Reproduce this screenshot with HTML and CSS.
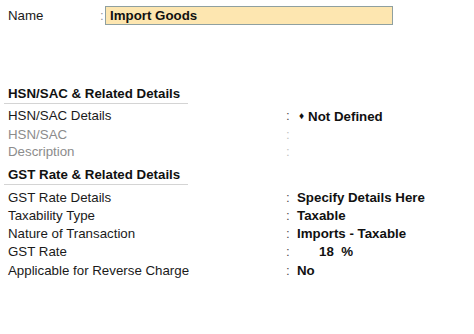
FILE: index.html
```html
<!DOCTYPE html>
<html lang="en">
<head>
    <meta charset="UTF-8">
    <title>Stock Item - GST Details</title>
    <link rel="stylesheet" href="styles.css">
</head>
<body>
    <div class="screen">
        <!-- Name -->
        <div class="name-row">
            <span class="label">Name</span>
            <span class="colon">:</span>
            <div class="name-box">Import Goods</div>
        </div>

        <!-- HSN/SAC -->
        <div class="section hsn">
            <div class="section-title">HSN/SAC &amp; Related Details</div>
            <div class="row">
                <span class="label">HSN/SAC Details</span>
                <span class="colon">:</span>
                <span class="value"><span class="bullet">&#9830;</span>Not Defined</span>
            </div>
            <div class="row muted">
                <span class="label">HSN/SAC</span>
                <span class="colon">:</span>
                <span class="value"></span>
            </div>
            <div class="row muted">
                <span class="label">Description</span>
                <span class="colon">:</span>
                <span class="value"></span>
            </div>
        </div>

        <!-- GST -->
        <div class="section gst">
            <div class="section-title">GST Rate &amp; Related Details</div>
            <div class="row">
                <span class="label">GST Rate Details</span>
                <span class="colon">:</span>
                <span class="value">Specify Details Here</span>
            </div>
            <div class="row">
                <span class="label">Taxability Type</span>
                <span class="colon">:</span>
                <span class="value">Taxable</span>
            </div>
            <div class="row">
                <span class="label">Nature of Transaction</span>
                <span class="colon">:</span>
                <span class="value">Imports - Taxable</span>
            </div>
            <div class="row">
                <span class="label">GST Rate</span>
                <span class="colon">:</span>
                <span class="value rate">18&nbsp;&nbsp;%</span>
            </div>
            <div class="row">
                <span class="label">Applicable for Reverse Charge</span>
                <span class="colon">:</span>
                <span class="value">No</span>
            </div>
        </div>
    </div>
</body>
</html>
```

FILE: styles.css
```css
body, html {
    margin: 0;
    padding: 0;
    background: #ffffff;
    font-family: "Liberation Sans", Arial, sans-serif;
    font-size: 13.3px;
    color: #1a1a1a;
}
.screen {
    padding: 6px 0 0 8px;
}
.name-row {
    display: grid;
    grid-template-columns: 92px 5px 288px;
    align-items: center;
    height: 19px;
}
.name-row .colon {
    color: #9a9a9a;
}
.name-box {
    box-sizing: border-box;
    height: 19px;
    line-height: 17px;
    padding-left: 4px;
    background: #fde6b0;
    border: 1px solid #8fa0a0;
    font-weight: bold;
    color: #111;
}
.section-title {
    font-weight: bold;
    line-height: 18px;
    margin-left: -4px;
    padding-left: 4px;
    width: 180px;
    border-bottom: 1px solid #d4d4d4;
    color: #111;
}
.hsn {
    margin-top: 60px;
}
.hsn .section-title {
    margin-bottom: 3px;
}
.hsn .row {
    line-height: 17.5px;
}
.gst {
    margin-top: 5px;
}
.gst .section-title {
    margin-bottom: 4px;
}
.row {
    display: grid;
    grid-template-columns: 278px 11px auto;
    line-height: 18.3px;
}
.row .colon {
    color: #555;
}
.row .value {
    font-weight: bold;
    color: #111;
}
.row.muted .label {
    color: #8c8c8c;
}
.row.muted .colon {
    color: #c4c4c4;
}
.bullet {
    font-size: 10px;
    margin: 0 4px 0 2px;
    vertical-align: 2px;
}
.rate {
    padding-left: 22px;
}
```
